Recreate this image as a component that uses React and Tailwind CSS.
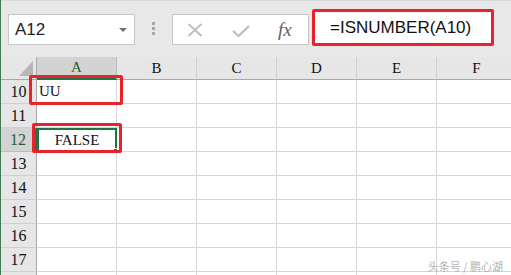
import React from 'react';

const cols = ['A', 'B', 'C', 'D', 'E', 'F'];
const rows = [10, 11, 12, 13, 14, 15, 16, 17, 18];

export default function App() {
  return (
    <div className="relative w-[511px] h-[275px] overflow-hidden bg-white border-l border-[#3f7a52] font-['Liberation_Serif',serif]">
      {/* Formula bar */}
      <div className="h-[57px] bg-[#e8e8e8] flex items-start pt-[13px] border-t border-[#d9d9d9]">
        <div className="ml-[7px] w-[127px] h-[31px] bg-white border border-[#c8c8c8] flex items-center justify-between pl-[6px] pr-[7px]">
          <span className="font-['Liberation_Sans',sans-serif] text-[17px] text-[#222] leading-none">A12</span>
          <span className="w-0 h-0 border-l-[4px] border-r-[4px] border-t-[4px] border-l-transparent border-r-transparent border-t-[#707070]" />
        </div>
        <div className="ml-[17px] mt-[8px] flex flex-col gap-[2px]">
          <span className="w-[3px] h-[3px] bg-[#a6a6a6]" />
          <span className="w-[3px] h-[3px] bg-[#a6a6a6]" />
          <span className="w-[3px] h-[3px] bg-[#a6a6a6]" />
        </div>
        <div className="ml-[17px] w-[137px] h-[31px] bg-white border border-[#c8c8c8] flex items-center">
          <svg className="ml-[14px]" width="16" height="14" viewBox="0 0 16 14">
            <path d="M1.5 1 L14.5 13 M14.5 1 L1.5 13" stroke="#bdbdbd" strokeWidth="1.8" fill="none" />
          </svg>
          <svg className="ml-[29px] mt-[2px]" width="18" height="12" viewBox="0 0 18 12">
            <path d="M1 6 L6.5 11 L17 1" stroke="#bdbdbd" strokeWidth="2.2" fill="none" />
          </svg>
          <span className="ml-[28px] italic text-[19px] text-[#5f5f5f] leading-none">fx</span>
        </div>
        <div className="ml-[3px] -mt-[5px] w-[182px] h-[37px] bg-white border-[3px] border-[#e8232b] rounded-[2px] flex items-center pl-[15px]">
          <span className="font-['Liberation_Sans',sans-serif] text-[17px] text-[#111] leading-none">=ISNUMBER(A10)</span>
        </div>
      </div>

      {/* Sheet grid */}
      <div className="grid grid-cols-[36px_80px_80px_80px_80px_80px_80px] w-[516px] text-[#111]">
        <div className="relative h-[23px] bg-[#e6e6e6] border-r border-b border-[#a8a8a8]">
          <span className="absolute right-[3px] bottom-[3px] w-0 h-0 border-b-[15px] border-l-[14px] border-b-[#b6b6b6] border-l-transparent" />
        </div>
        {cols.map((c) => (
          <div
            key={c}
            className={
              c === 'A'
                ? 'h-[23px] flex items-center justify-center text-[15px] bg-[#d3d3d3] border-r border-[#bcbcbc] border-b-2 border-b-[#217346] text-[#1f5c36]'
                : 'h-[23px] flex items-center justify-center text-[15px] bg-[#e6e6e6] border-r border-[#cfcfcf] border-b border-b-[#a8a8a8]'
            }
          >
            {c}
          </div>
        ))}
        {rows.map((r) => (
          <React.Fragment key={r}>
            <div
              className={
                r === 12
                  ? 'h-[24px] flex items-center justify-center text-[16px] bg-[#d3d3d3] border-r-2 border-[#217346] border-b border-b-[#bcbcbc] text-[#1f5c36]'
                  : 'h-[24px] flex items-center justify-center text-[16px] bg-[#e6e6e6] border-r border-[#a8a8a8] border-b border-b-[#cfcfcf]'
              }
            >
              {r < 18 ? r : ''}
            </div>
            {cols.map((c) => (
              <div
                key={c}
                className={
                  r === 12 && c === 'A'
                    ? 'relative h-[24px] flex items-center justify-center text-[15px] border-2 border-[#217346]'
                    : 'h-[24px] flex items-center text-[15px] border-r border-b border-[#d6d6d6]'
                }
              >
                {r === 10 && c === 'A' && <span className="pl-[2px]">UU</span>}
                {r === 12 && c === 'A' && (
                  <>
                    <span>FALSE</span>
                    <span className="absolute -right-[3px] -bottom-[3px] w-[5px] h-[5px] bg-[#217346] border border-white" />
                  </>
                )}
              </div>
            ))}
          </React.Fragment>
        ))}
      </div>

      {/* Annotation boxes */}
      <div className="absolute left-[28px] top-[75px] w-[94px] h-[30px] border-[3px] border-[#e8232b] rounded-[2px]" />
      <div className="absolute left-[31px] top-[123px] w-[90px] h-[30px] border-[3px] border-[#e8232b] rounded-[2px]" />

      {/* Watermark */}
      <div className="absolute right-[8px] bottom-[3px] text-[11px] text-[#b4b4b4] font-['Noto_Sans_CJK_SC',sans-serif] leading-none">
        头条号 / 鹏心湖
      </div>
    </div>
  );
}
